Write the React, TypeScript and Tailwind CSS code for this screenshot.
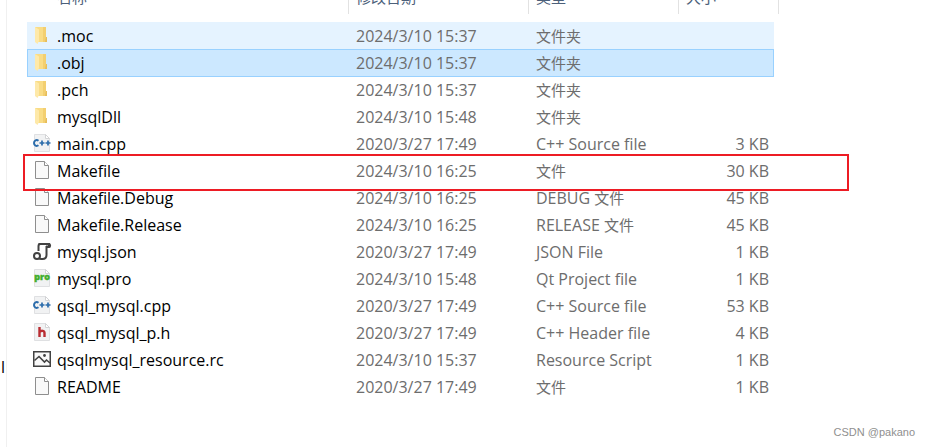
import React from "react";

type IconKind = "folder" | "cpp" | "doc" | "json" | "pro" | "header" | "image";

type FileRow = {
  name: string;
  icon: IconKind;
  date: string;
  type?: string;
  typeZh?: string;
  size?: string;
  state?: "hover" | "selected" | "marked";
};

const files: FileRow[] = [
  { name: ".moc", icon: "folder", date: "2024/3/10 15:37", typeZh: "文件夹", state: "hover" },
  { name: ".obj", icon: "folder", date: "2024/3/10 15:37", typeZh: "文件夹", state: "selected" },
  { name: ".pch", icon: "folder", date: "2024/3/10 15:37", typeZh: "文件夹" },
  { name: "mysqlDll", icon: "folder", date: "2024/3/10 15:48", typeZh: "文件夹" },
  { name: "main.cpp", icon: "cpp", date: "2020/3/27 17:49", type: "C++ Source file", size: "3 KB" },
  { name: "Makefile", icon: "doc", date: "2024/3/10 16:25", typeZh: "文件", size: "30 KB", state: "marked" },
  { name: "Makefile.Debug", icon: "doc", date: "2024/3/10 16:25", type: "DEBUG ", typeZh: "文件", size: "45 KB" },
  { name: "Makefile.Release", icon: "doc", date: "2024/3/10 16:25", type: "RELEASE ", typeZh: "文件", size: "45 KB" },
  { name: "mysql.json", icon: "json", date: "2020/3/27 17:49", type: "JSON File", size: "1 KB" },
  { name: "mysql.pro", icon: "pro", date: "2024/3/10 15:48", type: "Qt Project file", size: "1 KB" },
  { name: "qsql_mysql.cpp", icon: "cpp", date: "2020/3/27 17:49", type: "C++ Source file", size: "53 KB" },
  { name: "qsql_mysql_p.h", icon: "header", date: "2020/3/27 17:49", type: "C++ Header file", size: "4 KB" },
  { name: "qsqlmysql_resource.rc", icon: "image", date: "2024/3/10 15:37", type: "Resource Script", size: "1 KB" },
  { name: "README", icon: "doc", date: "2020/3/27 17:49", typeZh: "文件", size: "1 KB" },
];

const rowStyle = {
  hover: "bg-[#e5f3ff]",
  selected:
    "bg-[#cce8ff] shadow-[inset_1px_1px_0_#99d1ff,inset_-1px_0_0_#99d1ff,0_1px_0_#99d1ff]",
  marked: "relative",
};

function Page() {
  return (
    <>
      <path d="M1.5 1.5h11l4 4v13h-15z" fill="#f1f2f3" stroke="#dfe0e2" />
      <path d="M12.5 1.5v4h4z" fill="#fff" stroke="#d3d4d6" />
    </>
  );
}

function FileIcon({ kind }: { kind: IconKind }) {
  return (
    <svg viewBox="0 0 18 20" className="h-5 w-[18px] shrink-0 overflow-visible" aria-hidden="true">
      {kind === "folder" && (
        <>
          <path d="M2 2h11v10h1v5H4z" fill="#f9dc86" />
          <path d="M10 2h3v10h1v5h-4z" fill="#f3cf70" />
          <path d="M13 12h1v5h-2z" fill="#e6bd5c" />
          <path d="M2 2l4 2.500V16l-1.500 3L2 17z" fill="#fee9a9" />
        </>
      )}
      {kind === "doc" && (
        <>
          <path d="M2.5 1.5h9l4 4v13h-13z" fill="#f9f9f9" stroke="#8e8e8e" />
          <path d="M11.5 1.5v4h4" fill="#fff" stroke="#8e8e8e" />
        </>
      )}
      {kind === "cpp" && (
        <>
          <Page />
          <g fill="none" stroke="#2b6cab" strokeWidth="2">
            <path d="M5.5 7.7C3.5 6.3 1 7.4 1 10s2.5 3.7 4.5 2.3" />
            <path d="M6.5 10h5M9 7.5v5M12.5 10h5M15 7.5v5" strokeWidth="1.7" />
          </g>
        </>
      )}
      {kind === "pro" && (
        <>
          <Page />
          <text
            x="9"
            y="12"
            textAnchor="middle"
            fill="#3fae2a"
            stroke="#3fae2a"
            strokeWidth="0.4"
            className="font-['Open_Sans',sans-serif] text-[9px] font-extrabold"
          >
            pro
          </text>
        </>
      )}
      {kind === "header" && (
        <>
          <Page />
          <path
            d="M6.5 5v10M6.5 10.2C8 8.3 11.5 8.2 11.5 11v4"
            fill="none"
            stroke="#b92d32"
            strokeWidth="2.4"
          />
        </>
      )}
      {kind === "json" && (
        <g fill="none" stroke="#424242" strokeWidth="2">
          <path d="M5.5 10V5c0-1.500.7-2 2-2H16c1.500 0 1.500 3 0 3h-2.500v8c0 3-1.500 4-4 4H8" />
          <path d="M5.5 3H16v2.500h-3" />
          <circle cx="4" cy="15" r="3" />
          <path d="M6 17.500c1 .7 2 .5 3 .5" />
        </g>
      )}
      {kind === "image" && (
        <g fill="none" stroke="#424242">
          <path d="M.75 2.75h16.500v14.500H.75z" strokeWidth="1.500" fill="#fafafa" />
          <path d="M1.5 11.500L6 7.500l5.500 5.500 2-2 3.500 3" strokeWidth="1.600" />
          <circle cx="11.500" cy="6.500" r="1.400" fill="#424242" stroke="none" />
        </g>
      )}
    </svg>
  );
}

export default function App() {
  return (
    <main className="flex h-screen overflow-hidden bg-white font-['Open_Sans','Noto_Sans_CJK_SC',sans-serif] text-base leading-[26px] text-[#6d6d6d]">
      <aside className="flex w-[7px] shrink-0 justify-end overflow-hidden border-r border-[#f0f0f0] pt-[354px] pr-px text-black">
        l
      </aside>
      <section className="flex min-w-0 grow flex-col justify-between">
        <table className="-mt-[14px] ml-5 w-[747px] table-fixed border-separate border-spacing-0">
          <colgroup>
            <col className="w-[322px]" />
            <col className="w-[180px]" />
            <col className="w-[150px]" />
            <col />
          </colgroup>
          <thead>
            <tr className="h-9 text-left align-top text-[15px] leading-[22px] text-[#4c607a]">
              <th className="p-0 font-normal">
                <div className="h-7 border-r border-[#e2e2e2] pl-[30px]">名称</div>
              </th>
              <th className="p-0 font-normal">
                <div className="h-7 border-r border-[#e2e2e2] pl-[7px]">修改日期</div>
              </th>
              <th className="p-0 font-normal">
                <div className="h-7 border-r border-[#e2e2e2] pl-[7px]">类型</div>
              </th>
              <th className="p-0 font-normal">
                <div className="-mr-[5px] h-7 border-r border-[#e2e2e2] pl-[7px]">大小</div>
              </th>
            </tr>
          </thead>
          <tbody>
            {files.map((file) => (
              <tr key={file.name} className={`h-[27px] ${file.state ? rowStyle[file.state] : ""}`}>
                <td className="p-0 pl-1.5">
                  <div className="flex h-[27px] items-center gap-1.5 pb-px whitespace-nowrap text-black">
                    <FileIcon kind={file.icon} />
                    <span className="pt-0.5">{file.name}</span>
                  </div>
                </td>
                <td className="p-0 pt-px pl-[7px] whitespace-nowrap">{file.date}</td>
                <td className="p-0 pt-px pl-[7px] whitespace-nowrap">
                  {file.type}
                  {file.typeZh && <span className="text-[15px]">{file.typeZh}</span>}
                </td>
                <td className="p-0 pt-px pr-[5px] text-right whitespace-nowrap">
                  {file.size}
                  {file.state === "marked" && (
                    <div className="pointer-events-none absolute -top-[3px] -right-[75px] -left-1 h-[37px] border-2 border-[#ed1c24]" />
                  )}
                </td>
              </tr>
            ))}
          </tbody>
        </table>
        <footer className="pr-[14px] pb-1.5 text-right font-['Liberation_Sans',sans-serif] text-[11px] leading-[18px] text-[#8f8f8f]">
          CSDN @pakano
        </footer>
      </section>
    </main>
  );
}
